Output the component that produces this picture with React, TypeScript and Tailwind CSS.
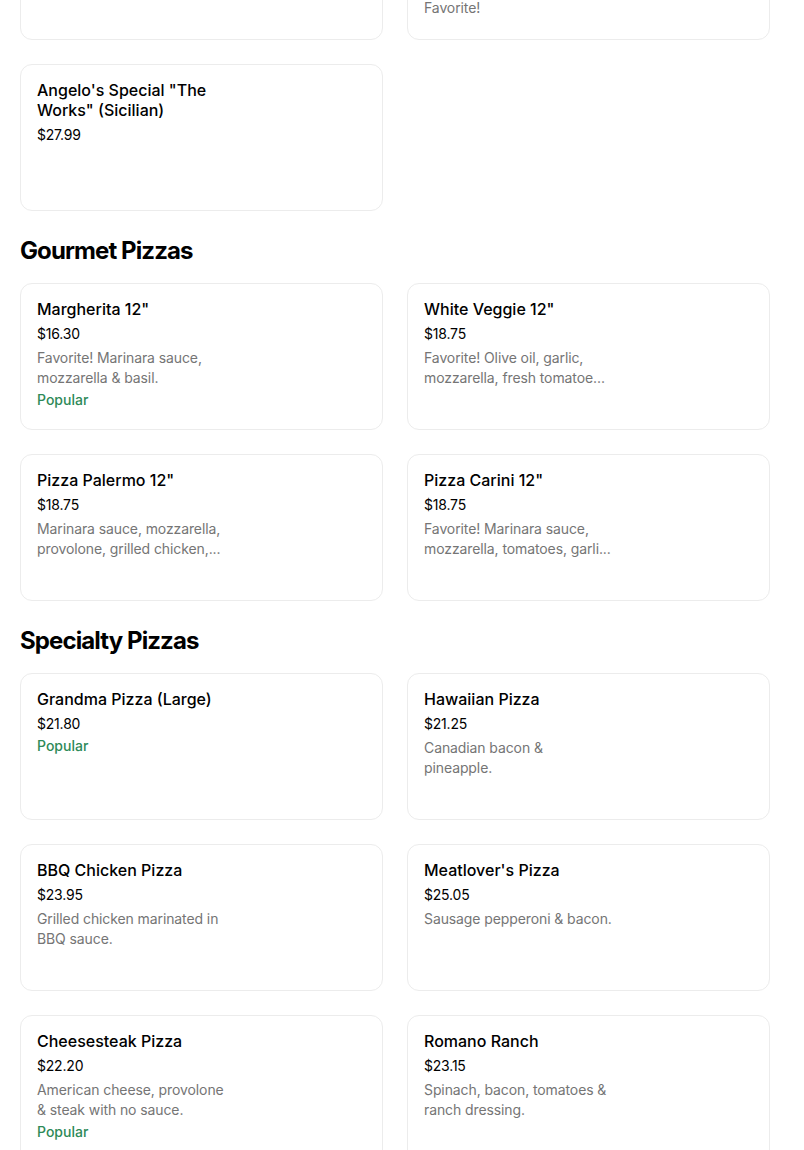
import React from "react";

type Item = { name: string[]; price: string; desc?: string[]; popular?: boolean };

const Card = ({ item }: { item: Item }) => (
  <div className="h-[147px] rounded-xl border border-[#ececec] bg-white px-4 pt-[15px]">
    <div className="w-[200px]">
      <div className="text-[16px] leading-[20px] font-medium text-[#000000]">
        {item.name.map((l, i) => (
          <div key={i} className="whitespace-nowrap">{l}</div>
        ))}
      </div>
      <div className="mt-[5px] text-[14px] leading-[20px] tracking-[-0.2px] text-[#000000]">{item.price}</div>
      {item.desc && (
        <div className="mt-[4px] text-[14px] leading-[20px] tracking-[-0.1px] text-[#757575]">
          {item.desc.map((l, i) => (
            <div key={i} className="whitespace-nowrap">{l}</div>
          ))}
        </div>
      )}
      {item.popular && (
        <div className="mt-[2px] text-[14px] leading-[20px] font-medium text-[#2e8a58]">Popular</div>
      )}
    </div>
  </div>
);

const Grid = ({ items }: { items: Item[] }) => (
  <div className="grid w-[750px] grid-cols-2 gap-6">
    {items.map((it, i) => (
      <Card key={i} item={it} />
    ))}
  </div>
);

const Heading = ({ children }: { children: React.ReactNode }) => (
  <h2 className="mt-[24px] mb-[16px] text-[24px] leading-[32px] font-bold tracking-[-0.9px] text-black">
    {children}
  </h2>
);

export default function App() {
  const top: Item[] = [
    { name: ["Angelo's Special \"The", "Works\" 12\""], price: "$22.50" },
    { name: ["Chicken Bacon Ranch", "Pizza (Large)"], price: "$23.95", desc: ["Grilled chicken, bacon & ranch.", "Favorite!"] },
    { name: ["Angelo's Special \"The", "Works\" (Sicilian)"], price: "$27.99" },
  ];
  const gourmet: Item[] = [
    { name: ["Margherita 12\""], price: "$16.30", desc: ["Favorite! Marinara sauce,", "mozzarella & basil."], popular: true },
    { name: ["White Veggie 12\""], price: "$18.75", desc: ["Favorite! Olive oil, garlic,", "mozzarella, fresh tomatoe..."] },
    { name: ["Pizza Palermo 12\""], price: "$18.75", desc: ["Marinara sauce, mozzarella,", "provolone, grilled chicken,..."] },
    { name: ["Pizza Carini 12\""], price: "$18.75", desc: ["Favorite! Marinara sauce,", "mozzarella, tomatoes, garli..."] },
  ];
  const specialty: Item[] = [
    { name: ["Grandma Pizza (Large)"], price: "$21.80", popular: true },
    { name: ["Hawaiian Pizza"], price: "$21.25", desc: ["Canadian bacon &", "pineapple."] },
    { name: ["BBQ Chicken Pizza"], price: "$23.95", desc: ["Grilled chicken marinated in", "BBQ sauce."] },
    { name: ["Meatlover's Pizza"], price: "$25.05", desc: ["Sausage pepperoni & bacon."] },
    { name: ["Cheesesteak Pizza"], price: "$22.20", desc: ["American cheese, provolone", "& steak with no sauce."], popular: true },
    { name: ["Romano Ranch"], price: "$23.15", desc: ["Spinach, bacon, tomatoes &", "ranch dressing."] },
  ];
  return (
    <div className="h-[1150px] overflow-hidden bg-white pl-5" style={{ fontFamily: "Inter, 'Noto Sans', sans-serif" }}>
      <div className="-mt-[107px]">
        <Grid items={top} />
      </div>
      <Heading>Gourmet Pizzas</Heading>
      <Grid items={gourmet} />
      <Heading>Specialty Pizzas</Heading>
      <Grid items={specialty} />
    </div>
  );
}
